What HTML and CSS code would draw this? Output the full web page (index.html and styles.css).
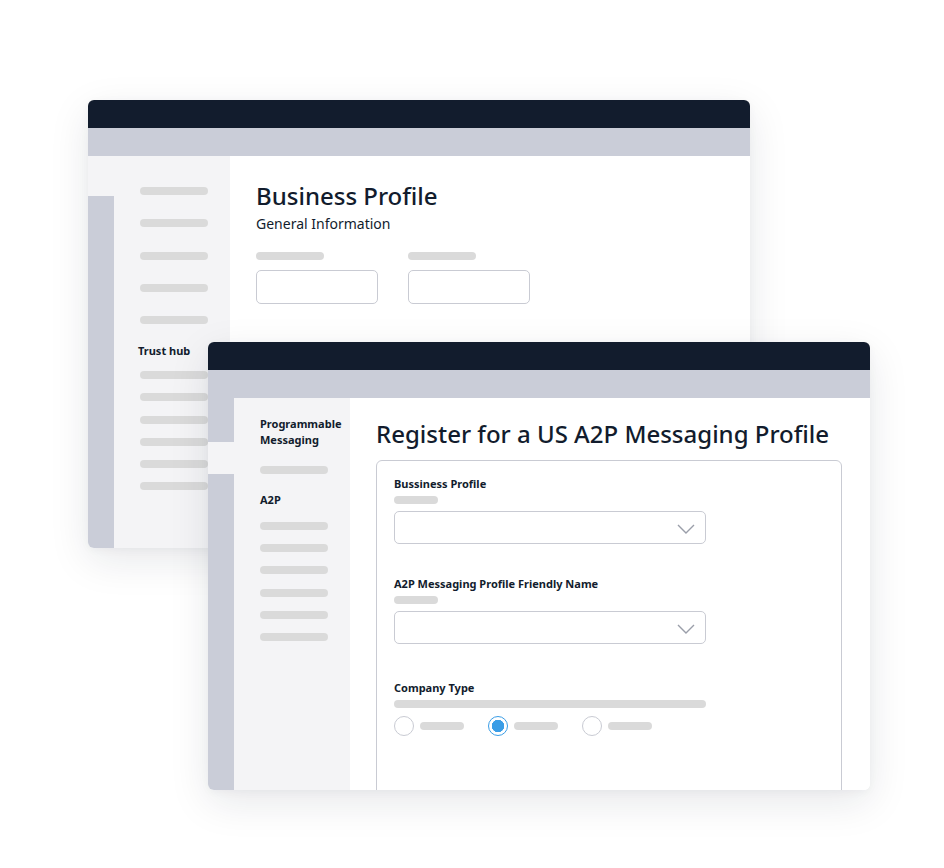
FILE: index.html
```html
<!DOCTYPE html>
<html>
<head>
<meta charset="utf-8">
<link rel="stylesheet" href="styles.css">
</head>
<body>
<div class="scene">
  <div class="window win-back">
    <div class="titlebar"></div>
    <div class="toolbar"></div>
    <div class="body">
      <div class="strip">
        <div class="seg light seg-back-top"></div>
        <div class="seg gray fill"></div>
      </div>
      <div class="nav nav-back">
        <div class="bar nb-first"></div>
        <div class="bar nb-gap"></div>
        <div class="bar nb-gap"></div>
        <div class="bar nb-gap"></div>
        <div class="bar nb-gap"></div>
        <div class="nav-title nb-title">Trust hub</div>
        <div class="bar nb-after"></div>
        <div class="bar nb-small"></div>
        <div class="bar nb-small"></div>
        <div class="bar nb-small"></div>
        <div class="bar nb-small"></div>
        <div class="bar nb-small"></div>
      </div>
      <div class="main main-back">
        <h1 class="title-back">Business Profile</h1>
        <div class="subtitle">General Information</div>
        <div class="field-row">
          <div class="field">
            <div class="bar"></div>
            <div class="input"></div>
          </div>
          <div class="field">
            <div class="bar"></div>
            <div class="input"></div>
          </div>
        </div>
      </div>
    </div>
  </div>

  <div class="window win-front">
    <div class="titlebar"></div>
    <div class="toolbar"></div>
    <div class="body">
      <div class="strip">
        <div class="seg gray seg-front-top"></div>
        <div class="seg light seg-front-mid"></div>
        <div class="seg gray fill"></div>
      </div>
      <div class="nav nav-front">
        <div class="nav-title nf-title">Programmable<br>Messaging</div>
        <div class="bar nf-bar1"></div>
        <div class="nav-title nf-a2p">A2P</div>
        <div class="bar nf-after"></div>
        <div class="bar nb-small"></div>
        <div class="bar nb-small"></div>
        <div class="bar nb-small"></div>
        <div class="bar nb-small"></div>
        <div class="bar nb-small"></div>
      </div>
      <div class="main main-front">
        <h1 class="title-front">Register for a US A2P Messaging Profile</h1>
        <div class="card">
          <div class="label l1">Bussiness Profile</div>
          <div class="bar short"></div>
          <div class="select">
            <svg class="chev" width="18" height="10" viewBox="0 0 18 10"><path d="M1 1 L9 9 L17 1" fill="none" stroke="#9a9ea9" stroke-width="1.4"/></svg>
          </div>
          <div class="label l2">A2P Messaging Profile Friendly Name</div>
          <div class="bar short"></div>
          <div class="select">
            <svg class="chev" width="18" height="10" viewBox="0 0 18 10"><path d="M1 1 L9 9 L17 1" fill="none" stroke="#9a9ea9" stroke-width="1.4"/></svg>
          </div>
          <div class="label l3">Company Type</div>
          <div class="bar wide"></div>
          <div class="radios">
            <div class="radio-item"><span class="radio"></span><span class="bar rbar"></span></div>
            <div class="radio-item"><span class="radio checked"></span><span class="bar rbar"></span></div>
            <div class="radio-item"><span class="radio"></span><span class="bar rbar"></span></div>
          </div>
        </div>
      </div>
    </div>
  </div>
</div>
</body>
</html>
```

FILE: styles.css
```css
* { box-sizing: border-box; }
html, body { margin: 0; padding: 0; background: #ffffff; }
body { font-family: "Noto Sans", "Open Sans", sans-serif; color: #121c2d; }

.scene { position: relative; width: 944px; height: 868px; overflow: hidden; background: #fff; }

.window {
  position: absolute;
  width: 662px;
  height: 448px;
  border-radius: 6px;
  overflow: hidden;
  background: #fff;
  box-shadow: 0 12px 40px rgba(18, 28, 45, 0.10), 0 2px 8px rgba(18, 28, 45, 0.04);
  display: flex;
  flex-direction: column;
}
.win-back { left: 88px; top: 100px; }
.win-front { left: 208px; top: 342px; }

.titlebar { height: 28px; background: #121c2d; flex: none; }
.toolbar { height: 28px; background: #cacdd8; flex: none; }
.body { flex: 1; display: flex; min-height: 0; }

.strip { width: 26px; flex: none; display: flex; flex-direction: column; }
.seg.light { background: #f4f4f6; }
.seg.gray { background: #cacdd8; }
.seg.fill { flex: 1; }
.seg-back-top { height: 40px; }
.seg-front-top { height: 44px; }
.seg-front-mid { height: 32px; }

.nav { width: 116px; flex: none; background: #f4f4f6; padding-left: 26px; }

.bar { display: block; height: 8px; width: 68px; border-radius: 4px; background: #dadada; }

.nav-title { font-size: 11px; font-weight: 700; line-height: 16px; color: #121c2d; white-space: nowrap; }

.nav-back { padding-top: 31px; }
.nav-back .nav-title { margin-left: -2px; }
.nb-gap { margin-top: 24.3px; }
.nb-title { margin-top: 19px; }
.nb-after { margin-top: 12px; }
.nb-small { margin-top: 14.2px; }

.nav-front { padding-top: 18px; }
.nf-bar1 { margin-top: 18px; }
.nf-a2p { margin-top: 18px; }
.nf-after { margin-top: 14px; }

.main { flex: 1; background: #fff; padding-left: 26px; min-width: 0; }

.main-back { padding-top: 24px; }
.title-back { margin: 0; font-size: 24px; font-weight: 500; line-height: 32px; letter-spacing: 0; }
.subtitle { font-size: 14px; line-height: 20px; margin-top: 2px; color: #121c2d; }
.field-row { display: flex; gap: 30px; margin-top: 18px; }
.field .bar { width: 68px; }
.input { margin-top: 10px; width: 122px; height: 34px; border: 1px solid #c9cbd3; border-radius: 5px; }

.main-front { padding-top: 20px; padding-right: 28px; }
.title-front { margin: 0; font-size: 24px; font-weight: 500; line-height: 32px; white-space: nowrap; }
.card {
  margin-top: 10px;
  height: 400px;
  border: 1px solid #c9cbd3;
  border-radius: 6px;
  padding: 16px 17px 0;
}
.label { font-size: 11px; font-weight: 700; line-height: 14px; color: #121c2d; }
.card .bar.short { width: 44px; margin-top: 5px; }
.card .bar.wide { width: 312px; margin-top: 5px; }
.select {
  margin-top: 7px;
  width: 312px;
  height: 33px;
  border: 1px solid #c9cbd3;
  border-radius: 5px;
  display: flex;
  align-items: center;
  justify-content: flex-end;
  padding-right: 10px;
}
.chev { display: block; margin-top: 2px; }
.l2 { margin-top: 33px; }
.l3 { margin-top: 37px; }

.radios { display: flex; gap: 24px; margin-top: 8px; }
.radio-item { display: flex; align-items: center; gap: 6px; }
.radio {
  width: 20px; height: 20px; border-radius: 50%;
  border: 1px solid #c9cbd3; background: #fff; display: block;
}
.radio.checked {
  border: 1.5px solid #3a9de6;
  background: radial-gradient(circle, #3a9de6 0 6px, #fff 6.5px);
}
.rbar { width: 44px; }
```
